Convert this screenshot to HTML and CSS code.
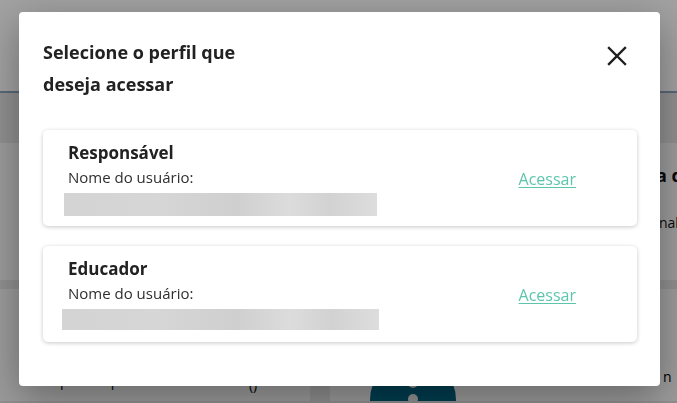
FILE: index.html
```html
<!DOCTYPE html>
<html lang="pt-BR">
<head>
<meta charset="utf-8">
<title>Selecione o perfil</title>
<link rel="stylesheet" href="styles.css">
</head>
<body>
<div class="page">
  <header class="page-header"></header>
  <main class="page-body">
    <section class="panel panel-left">
      <div class="panel-row"></div>
      <div class="panel-row panel-row-bottom">
        <span class="frag">l &nbsp;&nbsp;&nbsp;&nbsp;&nbsp;&nbsp;&nbsp;&nbsp;&nbsp;&nbsp;&nbsp; l &nbsp;&nbsp;&nbsp;&nbsp;&nbsp;&nbsp;&nbsp;&nbsp;&nbsp;&nbsp;&nbsp;&nbsp;&nbsp;&nbsp;&nbsp;&nbsp;&nbsp;&nbsp;&nbsp;&nbsp;&nbsp;&nbsp;&nbsp;&nbsp;&nbsp;&nbsp;&nbsp;&nbsp;&nbsp;&nbsp;&nbsp;&nbsp;&nbsp;&nbsp;&nbsp; ()</span>
      </div>
    </section>
    <section class="panel panel-right">
      <div class="panel-row">
        <h2 class="bg-title">a do dia</h2>
        <p class="bg-text">nal<span class="bg-link">|</span></p>
      </div>
      <div class="panel-row panel-row-bottom">
        <div class="bg-circle">
          <span class="bg-dot"></span>
          <span class="bg-dot"></span>
        </div>
        <span class="bg-small">g</span>
        <span class="bg-small bg-small-right">n e</span>
      </div>
    </section>
  </main>
</div>

<div class="overlay"></div>

<div class="modal" role="dialog" aria-labelledby="modal-title">
  <div class="modal-header">
    <h1 class="modal-title" id="modal-title">Selecione o perfil que<br>deseja acessar</h1>
    <button class="close-btn" aria-label="Fechar">
      <svg width="20" height="20" viewBox="0 0 20 20"><path d="M2 2 L18 18 M18 2 L2 18" stroke="#1f1f1f" stroke-width="2.4" stroke-linecap="square" fill="none"/></svg>
    </button>
  </div>
  <div class="profile-list">
    <div class="profile-card">
      <div class="profile-info">
        <div class="profile-name">Responsável</div>
        <div class="profile-label">Nome do usuário:</div>
        <div class="skeleton" style="width:313px"></div>
      </div>
      <a href="#" class="access-link">Acessar</a>
    </div>
    <div class="profile-card">
      <div class="profile-info">
        <div class="profile-name">Educador</div>
        <div class="profile-label">Nome do usuário:</div>
        <div class="skeleton skeleton-alt" style="width:317px"></div>
      </div>
      <a href="#" class="access-link">Acessar</a>
    </div>
  </div>
</div>
</body>
</html>
```

FILE: styles.css
```css
* { box-sizing: border-box; }

html, body {
  margin: 0;
  padding: 0;
  width: 677px;
  height: 403px;
  overflow: hidden;
  font-family: "Open Sans", "Noto Sans", sans-serif;
}

/* background page */
.page {
  width: 677px;
  height: 403px;
  background: #e4e4e4;
  overflow: hidden;
}

.page-header {
  height: 93px;
  background: #ffffff;
  border-bottom: 2px solid #8ca5bd;
}

.page-body {
  display: flex;
  gap: 20px;
  padding-top: 50px;
}

.panel {
  display: flex;
  flex-direction: column;
  gap: 9px;
}

.panel-left { width: 310px; }
.panel-right { flex: 1; }

.panel-row {
  background: #f6f6f6;
  height: 137px;
  position: relative;
  overflow: hidden;
}

.panel-row-bottom { height: 112px; }

.frag {
  position: absolute;
  left: 60px;
  top: 86px;
  font-size: 14px;
  color: #000;
  white-space: nowrap;
}

.bg-title {
  margin: 0;
  position: absolute;
  left: 326px;
  top: 20px;
  font-size: 18px;
  font-weight: 700;
  color: #111;
  white-space: nowrap;
}

.bg-text {
  margin: 0;
  position: absolute;
  left: 329px;
  top: 70px;
  font-size: 14px;
  color: #111;
  white-space: nowrap;
}

.bg-link { color: #1a5fb4; font-weight: 700; }

.bg-circle {
  position: absolute;
  left: 40px;
  top: 68px;
  width: 86px;
  height: 86px;
  border-radius: 50%;
  background: #00617f;
  display: flex;
  flex-direction: column;
  align-items: center;
  gap: 6px;
  padding-top: 21px;
}

.bg-dot {
  width: 10px;
  height: 10px;
  border-radius: 50%;
  background: #e8e8e8;
}

.bg-small {
  position: absolute;
  left: 247px;
  top: 74px;
  font-size: 14px;
  color: #000;
  white-space: nowrap;
}

.bg-small-right {
  left: 333px;
  top: 78px;
  letter-spacing: 2px;
}

.overlay {
  position: fixed;
  inset: 0;
  background: rgba(0, 0, 0, 0.37);
}

/* modal */
.modal {
  position: fixed;
  left: 19px;
  top: 12px;
  width: 641px;
  height: 374px;
  background: #ffffff;
  border-radius: 4px;
  box-shadow: 0 12px 40px rgba(0, 0, 0, 0.35);
  padding: 24px 23px 0 24px;
}

.modal-header {
  display: flex;
  justify-content: space-between;
  align-items: flex-start;
}

.modal-title {
  margin: 0;
  font-size: 18px;
  line-height: 32px;
  font-weight: 700;
  color: #222;
}

.close-btn {
  border: 0;
  background: none;
  padding: 0;
  margin: 10px 10px 0 0;
  width: 20px;
  height: 20px;
  cursor: pointer;
  display: block;
}

.close-btn svg { display: block; }

.profile-list {
  margin-top: 30px;
  display: flex;
  flex-direction: column;
  gap: 20px;
}

.profile-card {
  height: 96px;
  border-radius: 5px;
  background: #fff;
  box-shadow: 0 1px 4px rgba(0, 0, 0, 0.22);
  display: flex;
  align-items: center;
  padding: 11px 61px 10px 25px;
}

.profile-info {
  flex: 1;
  align-self: stretch;
  display: flex;
  flex-direction: column;
}

.profile-name {
  font-size: 17px;
  line-height: 24px;
  font-weight: 700;
  color: #222;
}

.profile-label {
  font-size: 15px;
  line-height: 21px;
  color: #2f2f2f;
  margin-top: 2px;
}

.skeleton {
  height: 23px;
  margin-left: -4px;
  margin-top: 5px;
  background: linear-gradient(90deg, #d4d4d4 0%, #d6d6d6 30%, #cfcfcf 55%, #dcdcdc 72%, #d2d2d2 85%, #dddddd 100%);
}

.skeleton-alt {
  height: 21px;
  margin-left: -6px;
  margin-top: 5px;
}

.access-link {
  font-size: 16px;
  color: #5cc6ad;
  text-decoration: underline;
  text-underline-offset: 2px;
}
```
